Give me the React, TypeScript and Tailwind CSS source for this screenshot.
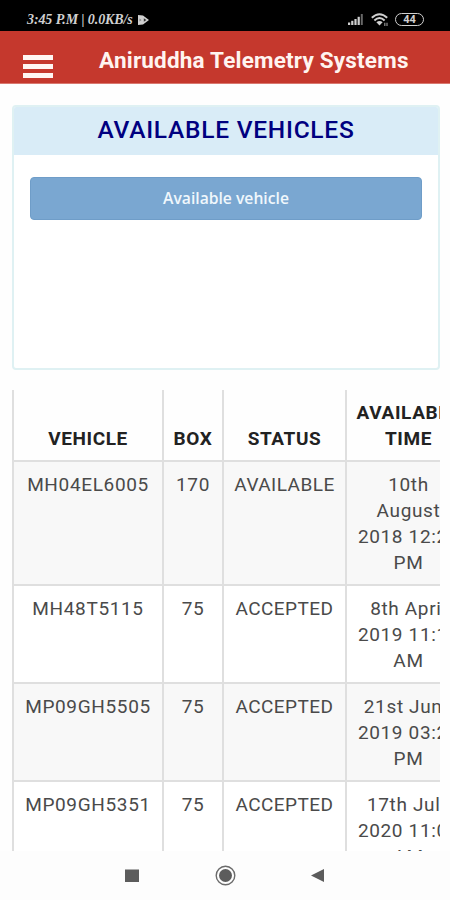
import React from 'react';

const vehicles = [
  { name: 'MH04EL6005', box: 170, status: 'AVAILABLE', time: ['10th', 'August', '2018 12:29', 'PM'] },
  { name: 'MH48T5115', box: 75, status: 'ACCEPTED', time: ['8th April', '2019 11:11', 'AM'] },
  { name: 'MP09GH5505', box: 75, status: 'ACCEPTED', time: ['21st June', '2019 03:22', 'PM'] },
  { name: 'MP09GH5351', box: 75, status: 'ACCEPTED', time: ['17th July', '2020 11:00', 'AM'] }
];

const StatusBar = () => (
  <div className="h-[31px] shrink-0 bg-black text-[#d0d0d0] flex items-center justify-between pl-[27px] pr-[26px] pt-2">
    <div className="flex items-center gap-1">
      <span className="font-['Liberation_Serif',serif] font-bold italic text-[14px] leading-4 tracking-[-0.1px] whitespace-nowrap">
        3:45 P.M | 0.0KB/s
      </span>
      <svg width="12" height="10" viewBox="0 0 12 10" fill="currentColor">
        <path d="M1 0 L6 0.5 L12 5 L6 9.5 L1 10 Z" />
        <path d="M6.8 3.2 L9.4 5 L6.8 6.8 Z" fill="#333" />
        <path d="M2.5 3.6 L4.6 5 L2.5 6.4 Z" fill="#888" />
      </svg>
    </div>
    <div className="flex items-center">
      {/* Signal */}
      <svg width="16" height="11" viewBox="0 0 16 11" fill="currentColor">
        <rect x="0" y="8.5" width="2.2" height="2.5" />
        <rect x="3.2" y="6.8" width="2.2" height="4.2" />
        <rect x="6.4" y="5" width="2.2" height="6" />
        <rect x="9.6" y="2.8" width="2.2" height="8.2" />
        <rect x="12.8" y="0" width="2" height="11" opacity="0.5" />
      </svg>
      {/* Wifi */}
      <svg className="ml-[7px]" width="18" height="14" viewBox="0 0 18 14" fill="none" stroke="currentColor" strokeWidth="2">
        <path d="M0.8 4.8 Q8.5 -2.4 16.2 4.8" />
        <path d="M3.4 7.4 Q8.5 2.6 13.6 7.4" />
        <path d="M5.4 9.2 Q8.5 6.6 11.6 9.2 L8.5 12.6 Z" fill="currentColor" stroke="none" />
        <path d="M13.8 9.8 V13 M16 9.8 V13" strokeWidth="1.2" opacity="0.7" />
      </svg>
      {/* Battery */}
      <div className="ml-[6px] w-[29px] h-[13px] rounded-full border-[1.5px] border-current flex items-center justify-center font-['Roboto',sans-serif] text-[11px] leading-none font-bold">
        44
      </div>
    </div>
  </div>
);

const Header = () => (
  <div className="h-[53px] shrink-0 bg-[#c5382d] border-b border-[#d9786f] flex items-center pl-[23px]">
    <button className="flex flex-col gap-1 mt-[18px]" aria-label="Menu">
      <span className="block w-[30px] h-[5px] bg-[#fff6f3]" />
      <span className="block w-[30px] h-[5px] bg-[#fff6f3]" />
      <span className="block w-[30px] h-[5px] bg-[#fff6f3]" />
    </button>
    <h1 className="ml-[46px] mt-[5px] text-[#fff4f0] font-bold text-[22.5px] leading-7 tracking-[0.19px] whitespace-nowrap">
      Aniruddha Telemetry Systems
    </h1>
  </div>
);

const VehiclePanel = () => (
  <div className="mt-[21px] ml-[12px] mr-[10px] h-[265px] shrink-0 rounded-[4px] border-2 border-[#dff1f3] bg-white overflow-hidden">
    <div className="h-[48px] bg-[#d9ecf7] flex items-center justify-center pb-[3px]">
      <h2 className="text-[#000080] font-medium text-[24.5px] leading-8 tracking-[0.75px] whitespace-nowrap">AVAILABLE VEHICLES</h2>
    </div>
    <div className="pt-[22px] px-4">
      <button className="w-full h-[43px] rounded-[4px] bg-[#7aa7d1] border border-[#6f9dc8] text-[#f0f7fc] font-['Open_Sans',sans-serif] font-semibold text-[15.7px]">
        Available vehicle
      </button>
    </div>
  </div>
);

const VehicleTable = () => (
  <div className="mt-[20px] ml-[12px] mr-[10px] h-[461px] shrink-0 overflow-hidden">
    <table className="w-[458px] table-fixed border-collapse text-center text-[19px] leading-[26px] tracking-[0.65px] text-[#4a4a4a]">
      <colgroup>
        <col className="w-[150px]" />
        <col className="w-[60px]" />
        <col className="w-[123px]" />
        <col className="w-[125px]" />
      </colgroup>
      <thead>
        <tr className="h-[71px] align-bottom text-[#222] tracking-[0.6px]">
          <th className="border-x-2 border-b-2 border-[#dfdfdf] pb-[8px]">VEHICLE</th>
          <th className="border-x-2 border-b-2 border-[#dfdfdf] pb-[8px]">BOX</th>
          <th className="border-x-2 border-b-2 border-[#dfdfdf] pb-[8px]">STATUS</th>
          <th className="border-x-2 border-b-2 border-[#dfdfdf] pb-[8px]">AVAILABLE<br />TIME</th>
        </tr>
      </thead>
      <tbody>
        {vehicles.map(v => (
          <tr key={v.name} className="align-top odd:bg-[#f8f8f8] even:bg-white">
            <td className="border-2 border-[#dfdfdf] pt-[10px] pb-[8px]">{v.name}</td>
            <td className="border-2 border-[#dfdfdf] pt-[10px] pb-[8px]">{v.box}</td>
            <td className="border-2 border-[#dfdfdf] pt-[10px] pb-[8px] tracking-[0.45px]">{v.status}</td>
            <td className="border-2 border-[#dfdfdf] pt-[10px] pb-[8px]">
              {v.time.map(line => (
                <div key={line} className="whitespace-nowrap">{line}</div>
              ))}
            </td>
          </tr>
        ))}
      </tbody>
    </table>
  </div>
);

const NavBar = () => (
  <div className="flex-1 bg-[#fdfdfd] flex justify-center">
    <svg width="204" height="49" viewBox="0 0 204 49" fill="#5c5c5c">
      <rect x="2" y="18.5" width="14" height="12.5" />
      <circle cx="102.5" cy="24.5" r="9.3" fill="none" stroke="#6b6b6b" strokeWidth="1.4" />
      <circle cx="102.5" cy="24.5" r="6.5" />
      <path d="M188 24.5 L201 18 V31 Z" />
    </svg>
  </div>
);

const App = () => {
  return (
    <div className="w-[450px] h-[900px] overflow-hidden bg-[#fefefe] flex flex-col font-['Roboto',sans-serif]">
      <StatusBar />
      <Header />
      <VehiclePanel />
      <VehicleTable />
      <NavBar />
    </div>
  );
};

export default App;
